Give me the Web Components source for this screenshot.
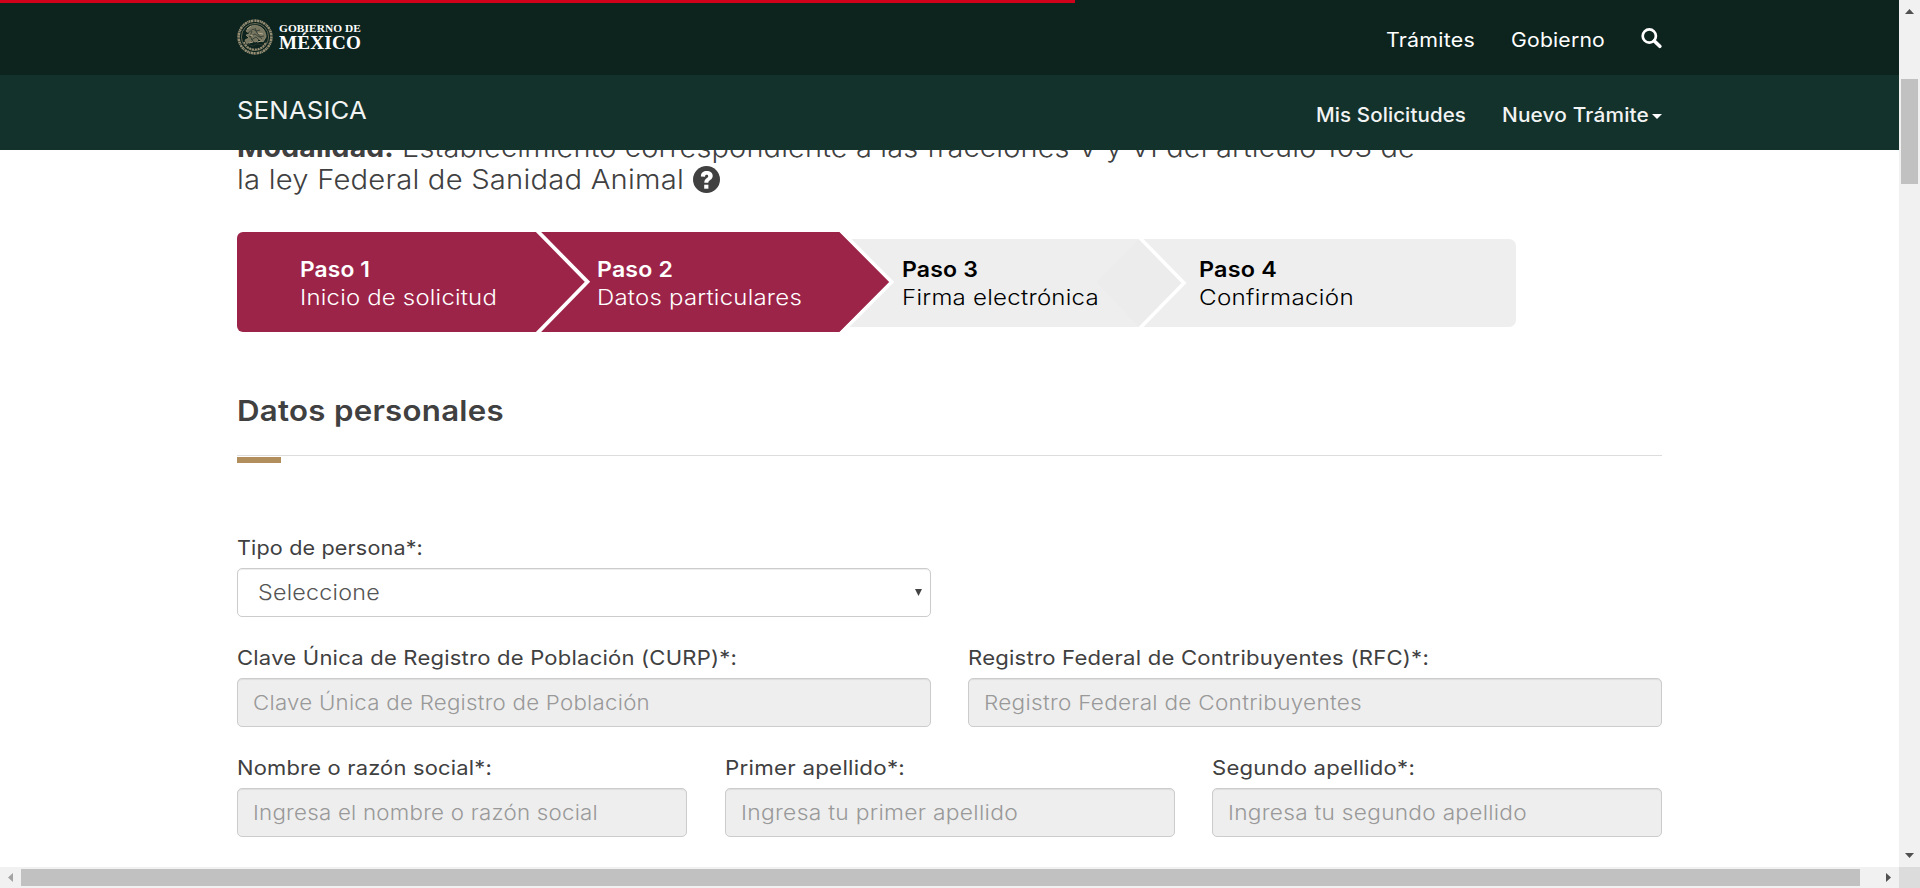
<!DOCTYPE html>
<html lang="es">
<head>
<meta charset="utf-8">
<title>SENASICA</title>
<style>
html,body{margin:0;height:100%;overflow:hidden;background:#fff}
body{font-family:Inter,"Open Sans",sans-serif;color:#404041}
</style>
</head>
<body>
<app-shell></app-shell>
<script>
const define = (name, html, setup) => customElements.define(name, class extends HTMLElement {
  connectedCallback() {
    if (this.shadowRoot) return;
    const t = document.createElement('template');
    t.innerHTML = html;
    this.attachShadow({mode: 'open'}).appendChild(t.content.cloneNode(true));
    if (setup) setup(this, this.shadowRoot);
  }
});

// Text that fills the width given in "w": mostly by wider letters, partly by tracking.
define('track-text', `<style>:host{display:inline-block;white-space:pre}span{display:inline-block;transform-origin:0 50%}</style><span><slot></slot></span>`, (el, root) => {
  const s = root.querySelector('span'), n = el.textContent.length;
  const w = +el.getAttribute('w'), natural = s.getBoundingClientRect().width;
  const scale = 1 + (w / natural - 1) * .8;
  s.style.letterSpacing = ((w / scale - natural) / n).toFixed(3) + 'px';
  s.style.transform = `scaleX(${scale.toFixed(4)})`;
  el.style.width = w + 'px';
});

define('national-seal', `<style>:host{display:block;width:36px;height:36px}svg{display:block}</style>
<svg width="36" height="36" viewBox="0 0 36 36" fill="none" stroke="#968e73">
<circle cx="18" cy="18" r="16.4" stroke-width="2.6" stroke-dasharray="1.6 .5 2.3 .6 1 .4"/>
<circle cx="18" cy="18" r="13.6" stroke-width=".9" stroke="#6d6d57"/>
<path d="M7 23c2 5 6 7.500 11 7.500s9-2.500 11-7.500" stroke-width="2" stroke-dasharray="2 .8"/>
<path d="M9 12c3-5 8-7 12-5 5 1 8 6 8 11l-3 5-4-3-3 3-5-1-4 3-2-4 4-2-3-3 4-1z" fill="#777660" stroke-width=".8"/>
<path d="M11 14l5-4 3 2 4-1M12 18l6-3 4 3 5-1M14 21l5-3 3 3M10 25l6 2 4-2 6 1M18 9l2 5 5 6M15 12l-2 5 4 7" stroke="#2d3a31" stroke-width=".8"/>
<path d="M10 10l4-3M13 16l3 1M21 14l5 1M20 23l5-1M12 24l4-1" stroke="#b1a88a" stroke-width="1"/>
</svg>`);

define('search-icon', `<style>:host{display:block;width:21px;height:21px}svg{display:block}</style>
<svg width="21" height="21" viewBox="0 0 21 21" fill="none" stroke="#fff"><circle cx="8.300" cy="8" r="6.600" stroke-width="2.700"/><path d="M13.300 13l5.500 5.300" stroke-width="3.600" stroke-linecap="round"/></svg>`);

define('help-icon', `<style>:host{display:block;width:27px;height:27px}svg{display:block}</style>
<svg width="27" height="27" viewBox="0 0 27 27"><circle cx="13.500" cy="13.500" r="13.500" fill="#404041"/><path d="M7.900 10.400C8 6.600 10.500 5.100 13.700 5.100c3.500 0 6 1.700 6 4.800 0 4.100-4.400 3.800-4.400 6.900h-4c0-4.800 3.900-4.500 3.900-6.600 0-1-.7-1.400-1.500-1.400-1.100 0-1.600.6-1.700 1.900z" fill="#fff"/><path d="M11.200 18.700h4.200v4h-4.200z" fill="#fff"/></svg>`);

define('site-header', `<style>
:host{display:block;position:relative;z-index:2;color:#fff;font-size:19.6px;line-height:24px}
.row{height:75px;padding:0 237px;display:flex;justify-content:space-between;align-items:flex-start}
.top{background:#0c231e}
.sub{background:#13322b;color:#f2f4f3}
.progress{position:absolute;left:0;top:0;width:1075px;height:3px;background:#d0021b}
.logo{display:flex;padding-top:19px;gap:6px}
.word{font:bold 10.800px/12px "Liberation Serif",serif;padding-top:3px;display:flex;flex-direction:column}
.word .m{font-size:18px;line-height:16px;margin-top:1px}
nav{display:flex}
.top nav{padding-top:28px}
.top nav>:nth-child(2){margin-left:36px}
search-icon{margin-left:36px}
.name{font-size:24.400px;line-height:30px;margin-top:20px}
.sub nav{padding-top:28px;font-weight:450}
.sub nav>:nth-child(2){margin-left:36px}
.caret{border:5px solid transparent;border-top-color:#fff;border-bottom:0;margin:11px 0 0 3px}
</style>
<div class="row top"><div class="logo"><national-seal></national-seal><div class="word"><track-text w="82">GOBIERNO DE</track-text><track-text class="m" w="82">MÉXICO</track-text></div></div>
<nav><track-text w="89">Trámites</track-text><track-text w="94">Gobierno</track-text><search-icon></search-icon></nav></div>
<div class="row sub"><track-text class="name" w="130">SENASICA</track-text>
<nav><track-text w="150">Mis Solicitudes</track-text><track-text w="147">Nuevo Trámite</track-text><span class="caret"></span></nav></div>
<div class="progress"></div>`);

define('procedure-title', `<style>
:host{display:flex;flex-direction:column;font-size:27.400px;line-height:32px;font-weight:300}
div{display:flex}b{font-weight:700}
help-icon{margin:3px 0 0 9px}
.r{margin-left:8px}
</style>
<div><b><track-text w="157">Modalidad:</track-text></b><track-text class="r" w="1013">Establecimiento correspondiente a las fracciones V y VI del artículo 103 de</track-text></div>
<div><track-text w="447">la ley Federal de Sanidad Animal</track-text><help-icon></help-icon></div>`);

define('step-item', `<style>
:host{display:flex;flex-direction:column;font-size:21.800px;line-height:28px;font-weight:300}
b{font-weight:600}
</style><b><slot name="step"></slot></b><slot></slot>`);

define('step-bar', `<style>
:host{display:grid;grid-template-columns:297px 305px 297px 1fr;position:relative;width:1279px;height:100px;margin-top:37px;box-sizing:border-box;padding:23px 0 0 63px;align-items:start}
svg{position:absolute;left:0;top:-2px}
step-item{position:relative;color:#000}
.done{color:#fff;font-weight:350}
</style>
<svg width="1279" height="104" viewBox="0 -2 1279 104">
<rect x="550" y="7" width="729" height="88" rx="7" fill="#eee"/>
<path d="M902 7L860 50l42 45 44-44z" fill="#ececec"/>
<path d="M903 6l44 45-44 45" fill="none" stroke="#fff" stroke-width="3.600"/>
<path d="M6 0H603l50 50-50 50H6a6 6 0 0 1-6-6V6a6 6 0 0 1 6-6z" fill="#9d2449"/>
<path d="M602.500-2.500l52.200 52.500-52.200 52.500" fill="none" stroke="#fff" stroke-width="3.600"/>
<path d="M299.500-2l51 51.800L299.500 102" fill="none" stroke="#fff" stroke-width="3.800"/>
</svg>
<step-item class="done"><track-text slot="step" w="70">Paso 1</track-text><track-text w="197">Inicio de solicitud</track-text></step-item>
<step-item class="done"><track-text slot="step" w="76">Paso 2</track-text><track-text w="205">Datos particulares</track-text></step-item>
<step-item><track-text slot="step" w="76">Paso 3</track-text><track-text w="197">Firma electrónica</track-text></step-item>
<step-item><track-text slot="step" w="78">Paso 4</track-text><track-text w="155">Confirmación</track-text></step-item>`);

define('section-title', `<style>
:host{display:block;margin-top:60px;font-size:29px;line-height:36px;font-weight:600}
div{height:62px;padding-top:1px;border-bottom:1px solid #ddd}
i{display:block;width:44px;height:6px;margin-top:1px;background:#b38e5d}
</style><div><slot></slot></div><i></i>`);

define('form-field', `<style>
:host{display:flex;flex-direction:column;gap:7px;font-size:20.300px;line-height:26px}
.box{height:49px;box-sizing:border-box;border:1px solid #ccc;border-radius:5px;background:#eee;box-shadow:inset 0 1px 1px rgba(0,0,0,.075);display:flex;align-items:center;justify-content:space-between;padding:0 8px 0 15px;color:#999;font-weight:350}
:host([kind=select]) .box{background:#fff;color:#555;padding:0 8px 2px 20px;font-size:21.500px;font-weight:300}
svg{display:none}:host([kind=select]) svg{display:block;margin-top:2px}
</style><slot name="label"></slot><div class="box"><slot></slot><svg width="7" height="7"><path d="M0 0h7L3.500 7z" fill="#444"/></svg></div>`);

define('personal-form', `<style>
:host{display:flex;flex-direction:column;gap:28px;margin-top:72px}
.two{display:grid;grid-template-columns:694px 694px;gap:37px}
.three{display:grid;grid-template-columns:repeat(3,450px);justify-content:space-between}
</style>
<div class="two"><form-field kind="select"><track-text slot="label" w="186">Tipo de persona*:</track-text><track-text w="122">Seleccione</track-text></form-field></div>
<div class="two">
<form-field><track-text slot="label" w="500">Clave Única de Registro de Población (CURP)*:</track-text><track-text w="397">Clave Única de Registro de Población</track-text></form-field>
<form-field><track-text slot="label" w="461">Registro Federal de Contribuyentes (RFC)*:</track-text><track-text w="378">Registro Federal de Contribuyentes</track-text></form-field></div>
<div class="three">
<form-field><track-text slot="label" w="255">Nombre o razón social*:</track-text><track-text w="345">Ingresa el nombre o razón social</track-text></form-field>
<form-field><track-text slot="label" w="180">Primer apellido*:</track-text><track-text w="277">Ingresa tu primer apellido</track-text></form-field>
<form-field><track-text slot="label" w="203">Segundo apellido*:</track-text><track-text w="299">Ingresa tu segundo apellido</track-text></form-field></div>`);

define('scroll-bar', `<style>
:host{display:flex;background:#f1f1f1;box-sizing:border-box}
:host([axis=y]){flex-direction:column;align-items:center;justify-content:space-between;padding:9px 0;height:867px;position:relative}
:host([axis=x]){align-items:center;justify-content:space-between;padding:0 8px;position:relative}
svg{display:block}
.thumb{background:#c1c1c1;position:absolute}
:host([axis=y]) .thumb{left:2px;width:17px;top:79px;height:105px}
:host([axis=x]) .thumb{top:2px;height:17px;left:21px;width:1839px}
:host([axis=x]) .v,:host([axis=y]) .h{display:none}
</style>
<svg class="v" width="9" height="5"><path d="M0 5L4.500 0 9 5z" fill="#505050"/></svg><svg class="h" width="5" height="9"><path d="M5 0L0 4.500 5 9z" fill="#a3a3a3"/></svg>
<div class="thumb"></div>
<svg class="v" width="9" height="5"><path d="M0 0L4.500 5 9 0z" fill="#505050"/></svg><svg class="h" width="5" height="9"><path d="M0 0L5 4.500 0 9z" fill="#505050"/></svg>`);

define('app-shell', `<style>
:host{display:grid;grid-template-columns:1899px 21px;grid-template-rows:867px 21px;width:1920px;height:888px;overflow:hidden}
.page{overflow:hidden}
main{display:flex;flex-direction:column;width:1425px;margin:-19px auto 0}
.corner{background:#dcdcdc}
</style>
<div class="page"><site-header></site-header><main><procedure-title></procedure-title><step-bar></step-bar><section-title><track-text w="267">Datos personales</track-text></section-title><personal-form></personal-form></main></div>
<scroll-bar axis="y"></scroll-bar><scroll-bar axis="x"></scroll-bar><div class="corner"></div>`);
</script>
</body>
</html>
